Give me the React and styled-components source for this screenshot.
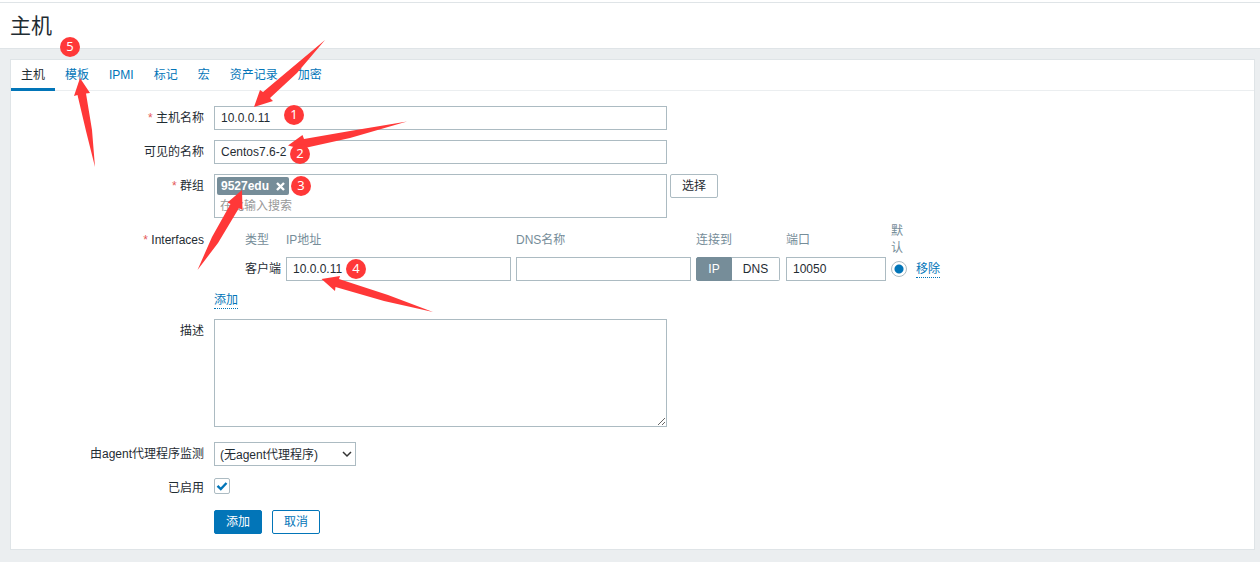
import React, { useState } from "react";
import styled, { createGlobalStyle, css } from "styled-components";

const color = {
  text: "#1f2c33",
  muted: "#768d99",
  link: "#0275b8",
  border: "#acbbc2",
  line: "#dfe4e7",
  page: "#ebeef0",
  required: "#e45959",
  mark: "#ff3838",
};

const GlobalStyle = createGlobalStyle`
  *, *::before, *::after { box-sizing: border-box; }
  body {
    margin: 0;
    background: ${color.page};
    color: ${color.text};
    font: 12px/16px "Liberation Sans", Arial, "Noto Sans CJK SC", sans-serif;
  }
  input, textarea, select, button { font: inherit; color: inherit; margin: 0; }
`;

const Page = styled.div`
  position: relative;
  padding-top: 2px;
  background: #fff;
`;

const Header = styled.header`
  border-top: 1px solid ${color.line};
  border-bottom: 1px solid ${color.line};
  padding: 7px 10px;
  height: 47px;
`;

const Title = styled.h1`
  margin: 0;
  font-size: 21px;
  line-height: 32px;
  font-weight: 400;
`;

const Main = styled.main`
  background: ${color.page};
  padding: 10px 5px 12px 10px;
`;

const Card = styled.form`
  background: #fff;
  border: 1px solid ${color.line};
`;

const Tabs = styled.nav`
  display: flex;
  height: 31px;
  border-bottom: 1px solid ${color.page};
`;

const Tab = styled.a`
  padding: 7px 10px;
  height: 31px;
  text-decoration: none;
  color: ${(p) => (p.$active ? color.text : color.link)};
  border-bottom: ${(p) => (p.$active ? `3px solid ${color.link}` : "0")};
`;

const Rows = styled.div`
  padding: 10px 0;
`;

const Row = styled.div`
  display: grid;
  grid-template-columns: 193px minmax(0, 1fr);
  grid-auto-rows: minmax(24px, auto);
  column-gap: 10px;
  align-items: start;
  padding: 5px 0;
`;

const TableRow = styled(Row)`
  padding-top: 0;
`;

const TallRow = styled(Row)`
  padding-bottom: 10px;
`;

const labelText = css`
  padding-top: 4px;
  text-align: right;
`;

const Label = styled.label`
  ${labelText}
  &::before {
    content: ${(p) => (p.$required ? '"* "' : "none")};
    color: ${color.required};
  }
`;

const GroupLabel = styled.span`
  ${labelText}
  padding-top: 9px;
  &::before {
    content: "* ";
    color: ${color.required};
  }
`;

const TextInput = styled.input`
  width: ${(p) => p.$width};
  height: 24px;
  padding: 0 6px;
  border: 1px solid ${color.border};
  border-radius: 0;
  background: #fff;
  display: block;
`;

const TextArea = styled.textarea`
  width: 453px;
  height: 108px;
  padding: 4px 6px;
  border: 1px solid ${color.border};
  display: block;
`;

const Inline = styled.div`
  display: flex;
  align-items: flex-start;
  gap: ${(p) => p.$gap || "3px"};
`;

const MultiSelect = styled.div`
  width: 453px;
  height: 44px;
  border: 1px solid ${color.border};
  padding: 2px;
`;

const Tag = styled.span`
  display: inline-flex;
  align-items: center;
  height: 18px;
  padding: 0 4px;
  gap: 7px;
  border-radius: 2px;
  background: ${color.muted};
  color: #fff;
  font-weight: 700;
  vertical-align: top;
`;

const TagRemove = styled.button`
  display: flex;
  padding: 0;
  border: 0;
  background: none;
`;

const SearchInput = styled.input`
  display: block;
  width: 100%;
  height: 22px;
  padding: 0 3px;
  border: 0;
  outline: 0;
  background: none;
  &::placeholder { color: #999; opacity: 1; }
`;

const Button = styled.button`
  height: 24px;
  padding: 0 11px;
  border: 1px solid ${(p) => (p.$kind ? color.link : color.border)};
  border-radius: 2px;
  background: ${(p) => (p.$kind === "primary" ? color.link : "#fff")};
  color: ${(p) => (p.$kind === "primary" ? "#fff" : p.$kind ? color.link : color.text)};
`;

const InterfaceTable = styled.table`
  table-layout: fixed;
  width: 737px;
  margin-bottom: 11px;
  border-collapse: collapse;
  th, td { padding: 0; text-align: left; font-weight: 400; }
  th { color: ${color.muted}; height: 34px; line-height: 17px; }
  td { height: 24px; }
`;

const Narrow = styled.div`
  width: 13px;
`;

const LinkAction = styled.a`
  display: inline-block;
  line-height: 15px;
  color: ${color.link};
  text-decoration: none;
  border-bottom: 1px dotted ${color.link};
`;

const Segments = styled.div`
  display: flex;
  width: 84px;
`;

const Segment = styled.label`
  position: relative;
  height: 24px;
  line-height: 22px;
  flex: ${(p) => (p.$first ? "0 0 36px" : "1")};
  text-align: center;
  border: 1px solid ${(p) => (p.$on ? color.muted : color.border)};
  border-left-width: ${(p) => (p.$first ? "1px" : "0")};
  border-radius: ${(p) => (p.$first ? "2px 0 0 2px" : "0 2px 2px 0")};
  background: ${(p) => (p.$on ? color.muted : "#fff")};
  color: ${(p) => (p.$on ? "#fff" : color.text)};
  input { position: absolute; inset: 0; opacity: 0; }
`;

const Radio = styled.input`
  appearance: none;
  display: block;
  width: 16px;
  height: 16px;
  border: 1px solid ${color.border};
  border-radius: 50%;
  background: #fff;
  &:checked { background: radial-gradient(circle, ${color.link} 4px, #fff 5px); }
`;

const CheckWrap = styled.span`
  display: grid;
  width: 16px;
  height: 16px;
  margin-top: 2px;
  > * { grid-area: 1 / 1; }
  svg { pointer-events: none; }
`;

const Checkbox = styled.input`
  appearance: none;
  width: 16px;
  height: 16px;
  border: 1px solid ${color.border};
  border-radius: 2px;
  background: #fff;
  &:not(:checked) + svg { display: none; }
`;

const SelectWrap = styled.div`
  display: grid;
  width: 142px;
  align-items: center;
  > * { grid-area: 1 / 1; }
  svg {
    justify-self: end;
    margin-right: 3px;
    pointer-events: none;
  }
`;

const Select = styled.select`
  appearance: none;
  height: 24px;
  padding: 1px 20px 0 5px;
  border: 1px solid ${color.border};
  border-radius: 0;
  background: #fff;
`;

const Arrows = styled.svg`
  position: absolute;
  left: 0;
  top: 0;
  pointer-events: none;
  fill: ${color.mark};
`;

const Badge = styled.span`
  position: absolute;
  left: ${(p) => p.$x}px;
  top: ${(p) => p.$y}px;
  width: 20px;
  height: 20px;
  border-radius: 50%;
  background: ${color.mark};
  color: #fff;
  font: 13px/18px "Noto Sans", sans-serif;
  text-align: center;
`;

const tabs = ["主机", "模板", "IPMI", "标记", "宏", "资产记录", "加密"];

const badges = [
  { n: 1, x: 284, y: 105 },
  { n: 2, x: 290, y: 144 },
  { n: 3, x: 291, y: 176 },
  { n: 4, x: 346, y: 259 },
  { n: 5, x: 60, y: 37 },
];

const arrows = [
  "254,107 260,90 263,92 288,71 325,40 297,73 270,98 273,101",
  "288,145.5 302.5,135 304,139 350,131 407,121.5 350,138 307,147.5 309,151",
  "242,190 242.5,210 239,208 218,243 197.5,270 212,237 230.5,204 227.5,202.5",
  "321.5,279 340,276 339,279 388,295 433,312 384,301 335.5,287 335,291",
  "80,78 90,93 86,93.5 92,130 95,167 86,131 77.5,95 74,96",
];

export default function App() {
  const [connect, setConnect] = useState("IP");
  return (
    <Page>
      <GlobalStyle />
      <Header>
        <Title>主机</Title>
      </Header>
      <Main>
        <Card onSubmit={(e) => e.preventDefault()}>
          <Tabs>
            {tabs.map((t, i) => (
              <Tab key={t} href="#" $active={i === 0}>{t}</Tab>
            ))}
          </Tabs>
          <Rows>
            <Row>
              <Label htmlFor="host" $required>主机名称</Label>
              <TextInput id="host" $width="453px" defaultValue="10.0.0.11" />
            </Row>
            <Row>
              <Label htmlFor="visible">可见的名称</Label>
              <TextInput id="visible" $width="453px" defaultValue="Centos7.6-2" />
            </Row>
            <Row>
              <Label htmlFor="groups" $required>群组</Label>
              <Inline>
                <MultiSelect>
                  <Tag>
                    9527edu
                    <TagRemove type="button" aria-label="移除 9527edu">
                      <svg width="9" height="9" viewBox="0 0 9 9" stroke="#fff" strokeWidth="2.4">
                        <path d="M1 1 8 8M8 1 1 8" />
                      </svg>
                    </TagRemove>
                  </Tag>
                  <SearchInput id="groups" placeholder="在此输入搜索" />
                </MultiSelect>
                <Button type="button">选择</Button>
              </Inline>
            </Row>
            <TableRow>
              <GroupLabel>Interfaces</GroupLabel>
              <div>
                <InterfaceTable>
                  <colgroup>
                    <col width="31" />
                    <col width="41" />
                    <col width="230" />
                    <col width="180" />
                    <col width="90" />
                    <col width="105" />
                    <col width="25" />
                    <col width="35" />
                  </colgroup>
                  <thead>
                    <tr>
                      <th />
                      <th>类型</th>
                      <th>IP地址</th>
                      <th>DNS名称</th>
                      <th>连接到</th>
                      <th>端口</th>
                      <th><Narrow>默认</Narrow></th>
                      <th />
                    </tr>
                  </thead>
                  <tbody>
                    <tr>
                      <td />
                      <td>客户端</td>
                      <td><TextInput $width="225px" aria-label="IP地址" defaultValue="10.0.0.11" /></td>
                      <td><TextInput $width="175px" aria-label="DNS名称" /></td>
                      <td>
                        <Segments>
                          {["IP", "DNS"].map((v, i) => (
                            <Segment key={v} $first={i === 0} $on={connect === v}>
                              <input
                                type="radio"
                                name="connect"
                                checked={connect === v}
                                onChange={() => setConnect(v)}
                              />
                              {v}
                            </Segment>
                          ))}
                        </Segments>
                      </td>
                      <td><TextInput $width="100px" aria-label="端口" defaultValue="10050" /></td>
                      <td><Radio type="radio" name="default" aria-label="默认" defaultChecked /></td>
                      <td><LinkAction href="#">移除</LinkAction></td>
                    </tr>
                  </tbody>
                </InterfaceTable>
                <LinkAction href="#">添加</LinkAction>
              </div>
            </TableRow>
            <TallRow>
              <Label htmlFor="description">描述</Label>
              <TextArea id="description" />
            </TallRow>
            <Row>
              <Label htmlFor="proxy">由agent代理程序监测</Label>
              <SelectWrap>
                <Select id="proxy">
                  <option>(无agent代理程序)</option>
                </Select>
                <svg width="12" height="12" fill="none" stroke="#333" strokeWidth="1.5">
                  <path d="M2 4 6 8 10 4" />
                </svg>
              </SelectWrap>
            </Row>
            <Row>
              <Label htmlFor="enabled">已启用</Label>
              <CheckWrap>
                <Checkbox id="enabled" type="checkbox" defaultChecked />
                <svg width="16" height="16" fill="none" stroke={color.link} strokeWidth="2.4">
                  <path d="M3.5 7.8 6.8 11 12.5 5" />
                </svg>
              </CheckWrap>
            </Row>
            <Row>
              <span />
              <Inline $gap="10px">
                <Button type="submit" $kind="primary">添加</Button>
                <Button type="button" $kind="outline">取消</Button>
              </Inline>
            </Row>
          </Rows>
        </Card>
      </Main>
      <Arrows width="440" height="320" aria-hidden="true">
        {arrows.map((p) => <polygon key={p} points={p} />)}
      </Arrows>
      {badges.map((b) => <Badge key={b.n} $x={b.x} $y={b.y}>{b.n}</Badge>)}
    </Page>
  );
}
